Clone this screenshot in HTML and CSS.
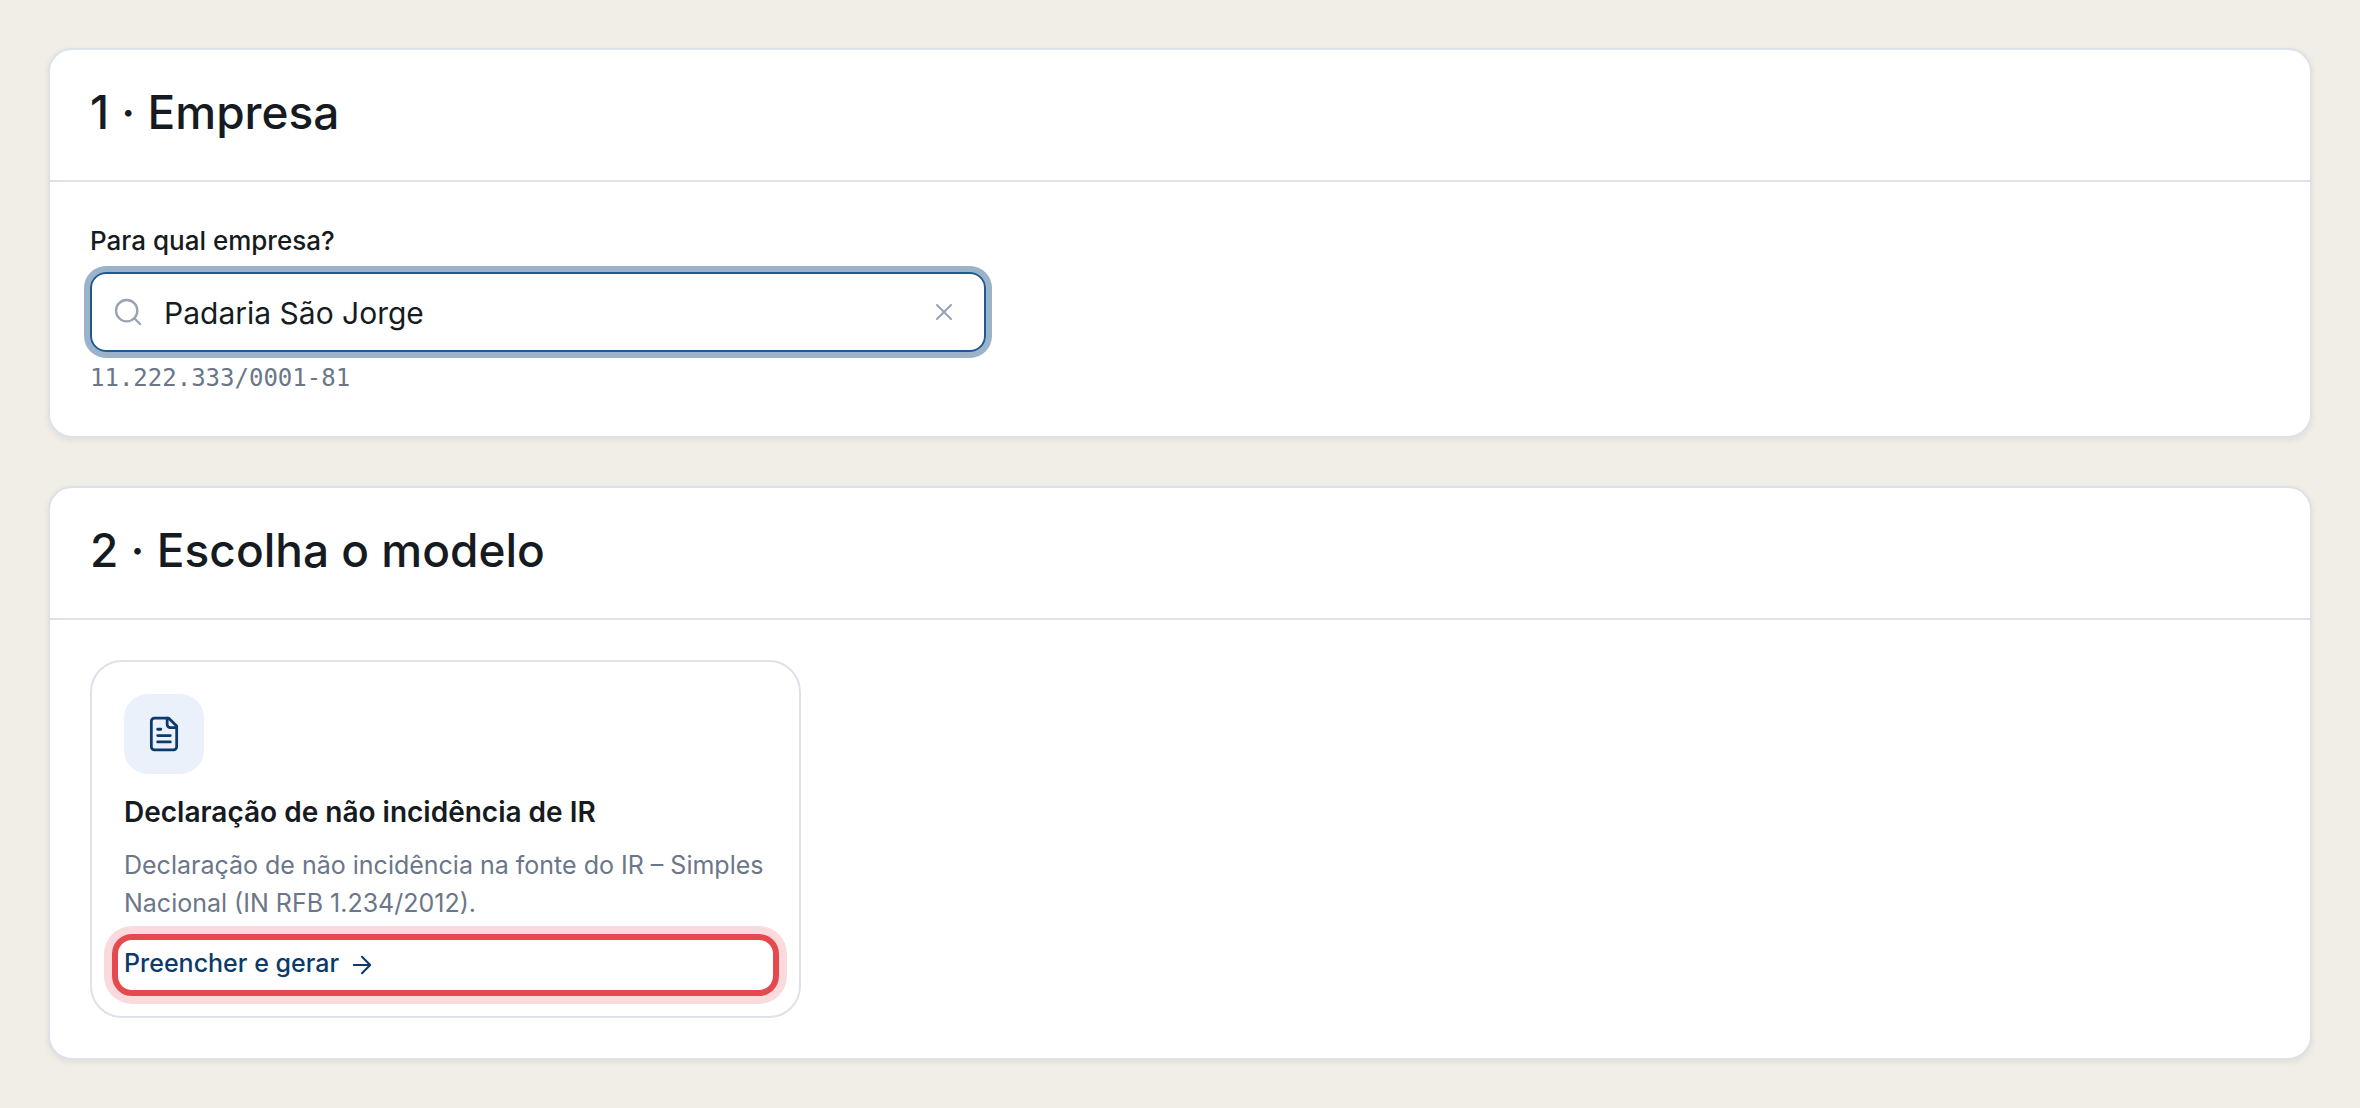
FILE: index.html
```html
<!DOCTYPE html>
<html lang="pt-BR">
<head>
    <meta charset="UTF-8">
    <meta name="viewport" content="width=device-width, initial-scale=1.0">
    <title>Gerar documento</title>
    <link rel="stylesheet" href="styles.css">
</head>
<body>
    <main class="page">
        <section class="card">
            <header class="card-header">
                <h2>1 · Empresa</h2>
            </header>
            <div class="card-body">
                <div class="field">
                    <label for="empresa">Para qual empresa?</label>
                    <div class="search-box">
                        <svg class="icon-search" viewBox="0 0 24 24" aria-hidden="true">
                            <circle cx="11" cy="11" r="8"/>
                            <path d="m21 21-4.3-4.3"/>
                        </svg>
                        <input type="text" id="empresa" value="Padaria São Jorge" autocomplete="off">
                        <button type="button" class="clear-btn" aria-label="Limpar">
                            <svg viewBox="0 0 24 24" aria-hidden="true">
                                <path d="M18 6 6 18M6 6l12 12"/>
                            </svg>
                        </button>
                    </div>
                    <p class="cnpj">11.222.333/0001-81</p>
                </div>
            </div>
        </section>

        <section class="card">
            <header class="card-header">
                <h2>2 · Escolha o modelo</h2>
            </header>
            <div class="card-body">
                <div class="models">
                    <article class="model">
                        <div class="model-icon">
                            <svg viewBox="0 0 24 24" aria-hidden="true">
                                <path d="M15 2H6a2 2 0 0 0-2 2v16a2 2 0 0 0 2 2h12a2 2 0 0 0 2-2V7Z"/>
                                <path d="M14 2v4a2 2 0 0 0 2 2h4M10 9H8M16 13H8M16 17H8"/>
                            </svg>
                        </div>
                        <h3>Declaração de não incidência de IR</h3>
                        <p>Declaração de não incidência na fonte do IR – Simples Nacional (IN RFB 1.234/2012).</p>
                        <a href="#preencher" class="model-link">Preencher e gerar
                            <svg viewBox="0 0 24 24" aria-hidden="true">
                                <path d="M5 12h14M12 5l7 7-7 7"/>
                            </svg>
                        </a>
                    </article>
                </div>
            </div>
        </section>
    </main>
</body>
</html>
```
FILE: styles.css
```css
* {
    box-sizing: border-box;
}
body {
    font-family: Inter, "Liberation Sans", sans-serif;
    margin: 0;
    background-color: #f1eee7;
    color: #161b22;
}
h2, h3, p {
    margin: 0;
}
svg {
    fill: none;
    stroke: currentColor;
    stroke-width: 1.75;
    stroke-linecap: round;
    stroke-linejoin: round;
}
.page {
    display: flex;
    flex-direction: column;
    gap: 48px;
    padding: 48px;
}
.card {
    background: #fff;
    border: 2px solid #dee2e8;
    border-radius: 24px;
    box-shadow: 0 2px 6px rgba(22, 27, 34, 0.08);
}
.card-header {
    padding: 36px 40px 42px;
    border-bottom: 2px solid #dee2e8;
}
.card-header h2 {
    font-size: 46px;
    line-height: 52px;
    font-weight: 500;
}
.card-body {
    padding: 40px;
}

/* Company field */
.field {
    max-width: 896px;
}
.field label {
    display: block;
    margin-bottom: 12px;
    font-size: 26px;
    line-height: 38px;
    font-weight: 500;
}
.search-box {
    display: flex;
    align-items: center;
    gap: 20px;
    height: 80px;
    padding: 0 26px 0 20px;
    border: 2px solid #1e5a91;
    border-radius: 16px;
    box-shadow: 0 0 0 6px #9ab3ca;
    color: #98a2b3;
}
.icon-search {
    width: 32px;
    height: 32px;
    flex-shrink: 0;
}
.search-box input {
    flex: 1;
    min-width: 0;
    padding: 2px 0 0;
    border: 0;
    outline: none;
    background: none;
    font-family: inherit;
    font-size: 30px;
    color: #161b22;
}
.clear-btn {
    display: flex;
    padding: 0;
    border: 0;
    background: none;
    color: inherit;
    cursor: pointer;
}
.clear-btn svg {
    width: 28px;
    height: 28px;
}
.cnpj {
    margin-top: 8px;
    font-family: "DejaVu Sans Mono", monospace;
    font-size: 24px;
    line-height: 36px;
    color: #6b7689;
}

/* Model list */
.models {
    display: grid;
    grid-template-columns: repeat(3, 1fr);
    gap: 24px;
}
.model {
    padding: 32px;
    border: 2px solid #dee2e8;
    border-radius: 32px;
}
.model-icon {
    display: flex;
    align-items: center;
    justify-content: center;
    width: 80px;
    height: 80px;
    border-radius: 24px;
    background: #eaf1fa;
    color: #0b3a6b;
}
.model-icon svg {
    width: 38px;
    height: 38px;
}
.model h3 {
    margin-top: 20px;
    font-size: 28px;
    line-height: 36px;
    font-weight: 600;
}
.model p {
    margin-top: 16px;
    font-size: 25px;
    line-height: 38px;
    color: #6b7689;
}
.model-link {
    display: block;
    margin: 12px -12px -12px;
    padding: 6px 6px 10px;
    border: 6px solid #e5484d;
    border-radius: 20px;
    box-shadow: 0 0 0 8px #fadadc;
    font-size: 25px;
    line-height: 34px;
    font-weight: 500;
    color: #0b3a6b;
    text-decoration: none;
}
.model-link svg {
    width: 28px;
    height: 28px;
    margin-left: 2px;
    vertical-align: middle;
}
```
